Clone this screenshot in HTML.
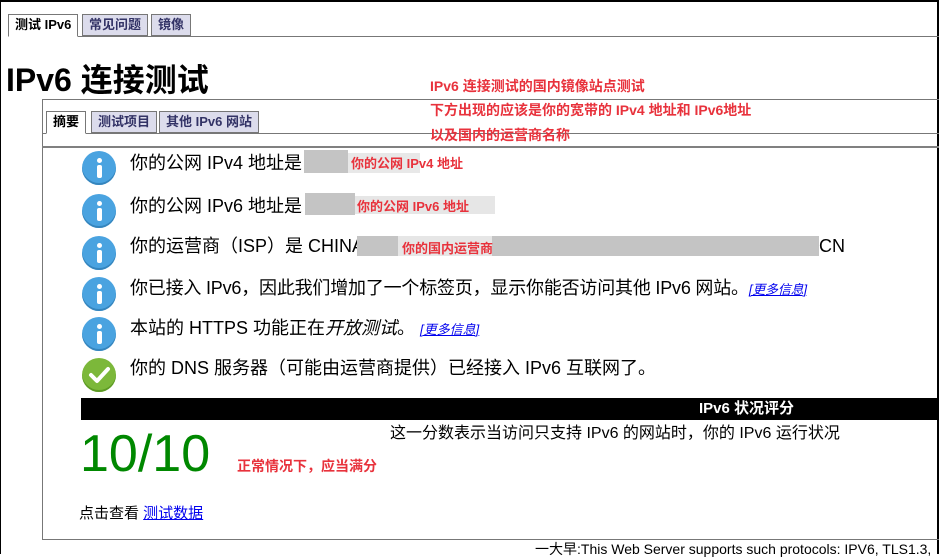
<!DOCTYPE html>
<html><head><meta charset="utf-8"><style>
*{margin:0;padding:0;box-sizing:border-box}
body{width:939px;height:554px;overflow:hidden;background:#fff;font-family:"Liberation Sans","Noto Sans CJK SC",sans-serif;position:relative;color:#000}
.abs{position:absolute;white-space:nowrap}
.frame{position:absolute;left:0;top:0;width:939px;height:554px;border-top:2px solid #000;border-left:1px solid #000;border-right:2px solid #000}
.tab{position:absolute;height:22px;border:1px solid #777;background:#dcdcec;font-size:13px;font-weight:bold;color:#333366;line-height:20px;padding:0 6px}
.tab.on{background:#fff;color:#000;border-bottom:1px solid #fff;height:23px}
.red{color:#e8323c;font-weight:bold;font-size:14px}
.row{position:absolute;left:130px;font-size:18px;line-height:22px;white-space:nowrap}
.ic{position:absolute;left:82px;width:34px;height:34px;border-radius:50%;background:#4aa3e0;box-shadow:inset 0 -2px 0 #3585bd}
.ic.i::before{content:"";position:absolute;left:15px;top:7px;width:5px;height:5px;border-radius:50%;background:#fff}
.ic.i::after{content:"";position:absolute;left:15px;top:14px;width:5px;height:13px;border-radius:2px;background:#fff}
.gray{position:absolute;background:#c4c4c4}
.lnk{color:#00e;text-decoration:underline;font-style:italic;font-size:13px}
</style></head><body>
<div class="frame"></div>
<div class="abs" style="left:8px;top:36px;width:931px;height:1px;background:#777"></div>
<div class="tab on" style="left:8px;top:14px">测试 IPv6</div>
<div class="tab" style="left:82px;top:14px">常见问题</div>
<div class="tab" style="left:151px;top:14px">镜像</div>
<div class="abs" style="left:6px;top:60px;font-size:32px;font-weight:bold;line-height:40px">IPv6 连接测试</div>
<div class="abs" style="left:42px;top:99px;width:897px;height:1px;background:#777"></div>
<div class="abs" style="left:42px;top:99px;width:1px;height:441px;background:#777"></div>
<div class="abs" style="left:42px;top:133px;width:897px;height:1px;background:#777"></div>
<div class="abs" style="left:42px;top:146px;width:897px;height:2px;background:#808080"></div>
<div class="abs" style="left:42px;top:539px;width:897px;height:1px;background:#777"></div>
<div class="tab on" style="left:46px;top:111px">摘要</div>
<div class="tab" style="left:91px;top:111px">测试项目</div>
<div class="tab" style="left:159px;top:111px">其他 IPv6 网站</div>
<div class="abs red" style="left:430px;top:76px">IPv6 连接测试的国内镜像站点测试</div>
<div class="abs red" style="left:430px;top:100px">下方出现的应该是你的宽带的 IPv4 地址和 IPv6地址</div>
<div class="abs red" style="left:430px;top:125px">以及国内的运营商名称</div>

<div class="ic i" style="top:151px"></div>
<div class="row" style="top:152px">你的公网 IPv4 地址是</div>
<div class="gray" style="left:304px;top:150px;width:44px;height:23px"></div>
<div class="gray" style="left:348px;top:153px;width:72px;height:20px;background:#e8e8e8"></div>
<div class="abs red" style="left:351px;top:153px;font-size:13px">你的公网 IPv4 地址</div>

<div class="ic i" style="top:194px"></div>
<div class="row" style="top:195px">你的公网 IPv6 地址是</div>
<div class="gray" style="left:305px;top:193px;width:50px;height:22px"></div>
<div class="gray" style="left:355px;top:196px;width:140px;height:18px;background:#e6e6e6"></div>
<div class="abs red" style="left:357px;top:196px;font-size:13px">你的公网 IPv6 地址</div>

<div class="ic i" style="top:236px"></div>
<div class="row" style="top:235px">你的运营商（ISP）是 CHINA</div>
<div class="gray" style="left:357px;top:236px;width:462px;height:20px"></div>
<div class="gray" style="left:398px;top:236px;width:94px;height:20px;background:#e6e6e6"></div>
<div class="abs red" style="left:402px;top:238px;font-size:13px">你的国内运营商</div>
<div class="row" style="left:819px;top:235px">CN</div>

<div class="ic i" style="top:277px"></div>
<div class="row" style="top:277px;letter-spacing:-0.2px">你已接入 IPv6，因此我们增加了一个标签页，显示你能否访问其他 IPv6 网站。<span class="lnk">[更多信息]</span></div>

<div class="ic i" style="top:317px"></div>
<div class="row" style="top:317px">本站的 HTTPS 功能正在<i>开放测试</i>。 <span class="lnk">[更多信息]</span></div>

<div class="ic" style="top:358px;background:#7cb83a;box-shadow:inset 0 -2px 0 #5d9a24"></div>
<svg class="abs" style="left:82px;top:358px" width="34" height="34"><path d="M9 17 L15 23 L26 11" stroke="#fff" stroke-width="4" fill="none" stroke-linecap="round" stroke-linejoin="round"/></svg>
<div class="row" style="top:357px">你的 DNS 服务器（可能由运营商提供）已经接入 IPv6 互联网了。</div>

<div class="abs" style="left:81px;top:398px;width:858px;height:22px;background:#000"></div>
<div class="abs" style="left:699px;top:399px;color:#fff;font-weight:bold;font-size:15px;line-height:20px">IPv6 状况评分</div>
<div class="abs" style="left:80px;top:424px;color:#080;font-size:52px;line-height:60px">10/10</div>
<div class="abs red" style="left:237px;top:456px">正常情况下，应当满分</div>
<div class="abs" style="left:390px;top:424px;font-size:16px;line-height:20px">这一分数表示当访问只支持 IPv6 的网站时，你的 IPv6 运行状况</div>
<div class="abs" style="left:79px;top:504px;font-size:15px;line-height:20px">点击查看 <span style="color:#00e;text-decoration:underline">测试数据</span></div>
<div class="abs" style="left:535px;top:541px;font-size:14px;line-height:16px;width:401px;overflow:hidden">一大早:This Web Server supports such protocols: IPV6, TLS1.3, HTTP/2</div>
</body></html>
